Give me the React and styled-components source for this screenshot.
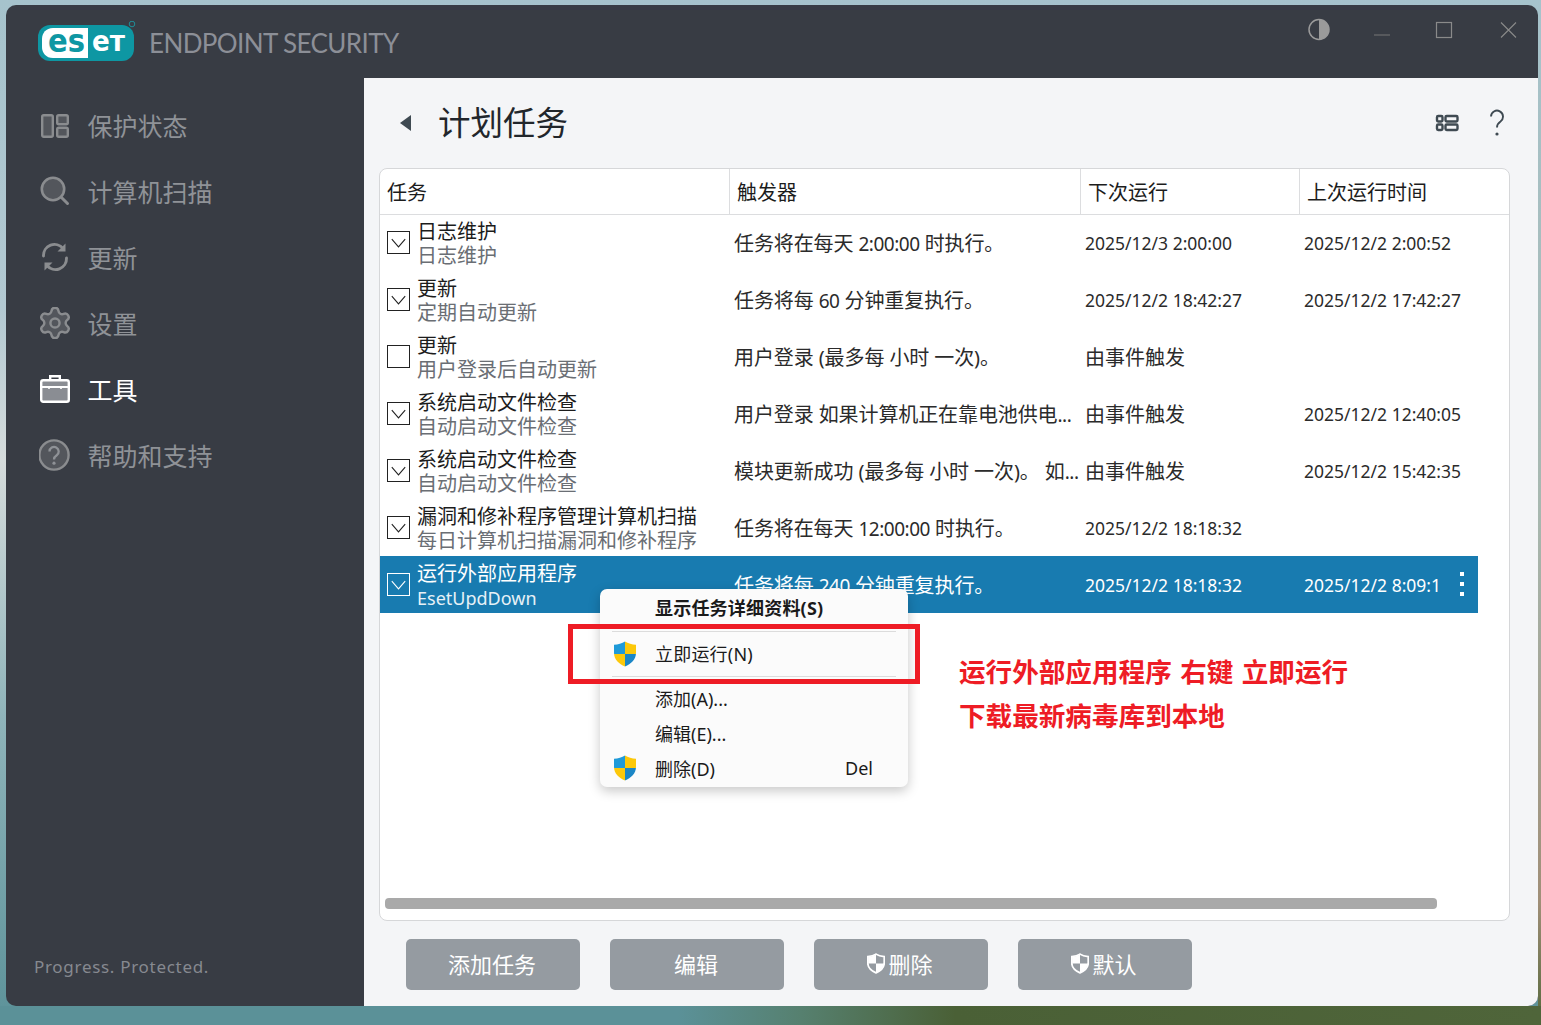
import React from "react";
import styled, { createGlobalStyle } from "styled-components";
import { Settings } from "lucide-react";

const GlobalStyle = createGlobalStyle`
  html, body { margin: 0; padding: 0; height: 100%; }
  body {
    font-family: "Noto Sans", "Noto Sans CJK SC", sans-serif;
    overflow: hidden;
    background:
      linear-gradient(90deg, #5b9198 44%, #56806f 52%, #4a6036 62%, #4f653a 100%) bottom / 100% 19px no-repeat,
      linear-gradient(180deg, #a6c3cc 0, #a8b8b0 50%, #a08f78 88%, #55683c 100%) right / 3px 100% no-repeat,
      linear-gradient(180deg, #a6c3cc 0, #b3c9d2 30%, #d6dcdc 45%, #8fb4ba 70%, #5c9299 100%);
  }
  #root { padding: 5px 3px 0 6px; }
`;

const Window = styled.div`
  position: relative;
  width: 1532px;
  height: 1001px;
  border-radius: 10px;
  overflow: hidden;
  background: #383c44;
  display: flex;
  flex-direction: column;
`;

const TitleBar = styled.header`
  height: 73px;
  flex: none;
  display: flex;
  align-items: flex-start;
  justify-content: space-between;
  padding: 13px 18px 0 32px;
  box-sizing: border-box;
`;

const Brand = styled.div`
  display: flex;
  align-items: center;
  gap: 11px;
  margin-top: 3px;
`;

const BrandName = styled.span`
  font-family: "Lato", sans-serif;
  font-size: 26px;
  font-weight: 400;
  letter-spacing: -0.6px;
  color: #8c8f97;
  white-space: nowrap;
  margin-top: 2px;
`;

const Controls = styled.div`
  display: flex;
  gap: 39px;
`;

const Body = styled.div`
  flex: 1;
  display: flex;
  min-height: 0;
`;

const Sidebar = styled.aside`
  width: 358px;
  flex: none;
  display: flex;
  flex-direction: column;
  padding: 14px 0 28px 33px;
  box-sizing: border-box;
`;

const Nav = styled.nav`
  display: flex;
  flex-direction: column;
`;

const NavItem = styled.a`
  height: 66px;
  display: flex;
  align-items: center;
  gap: 16.5px;
  font-size: 25px;
  color: ${({ $active }) => ($active ? "#ffffff" : "#8f9297")};
`;

const IconSlot = styled.span`
  width: 32px;
  height: 32px;
  flex: none;
  display: flex;
`;

const Tagline = styled.div`
  margin-top: auto;
  margin-left: -5px;
  font-size: 17px;
  letter-spacing: 0.7px;
  color: #868990;
`;

const Main = styled.main`
  flex: 1;
  min-width: 0;
  background: #f4f5f7;
  display: flex;
  flex-direction: column;
  padding-left: 15px;
`;

const PageHead = styled.div`
  height: 90px;
  flex: none;
  display: flex;
  align-items: center;
  padding: 0 33px 0 21px;
`;

const BackArrow = styled.span`
  width: 0;
  height: 0;
  border-style: solid;
  border-width: 8px 11px 8px 0;
  border-color: transparent #3f4a52 transparent transparent;
  margin-right: 27px;
`;

const PageTitle = styled.h1`
  margin: 0;
  font-size: 32.5px;
  font-weight: 400;
  color: #22262b;
  line-height: 1;
`;

const HeadTools = styled.div`
  margin-left: auto;
  display: flex;
  align-items: center;
  gap: 30px;
`;

const TableCard = styled.section`
  width: 1131px;
  height: 753px;
  flex: none;
  box-sizing: border-box;
  border: 1px solid #d6d7d9;
  border-radius: 8px;
  background: #fff;
  display: flex;
  flex-direction: column;
  overflow: hidden;
`;

const COLUMNS = "349px 351px 219px 179px";

const HeaderRow = styled.div`
  height: 46px;
  flex: none;
  display: grid;
  grid-template-columns: ${COLUMNS};
  border-bottom: 1px solid #dcdddf;
  box-sizing: border-box;
`;

const HeaderCell = styled.div`
  display: flex;
  align-items: center;
  padding-left: 7px;
  font-size: 20px;
  color: #1c1c1c;
  border-left: ${({ $first }) => ($first ? "none" : "1px solid #dcdddf")};
`;

const RowList = styled.div`
  flex: none;
  margin-top: -1px;
  display: flex;
  flex-direction: column;
`;

const Row = styled.div`
  height: 57px;
  width: 1098px;
  flex: none;
  position: relative;
  display: grid;
  grid-template-columns: ${COLUMNS};
  align-items: center;
  background: ${({ $selected }) => ($selected ? "#187bb0" : "transparent")};
  color: ${({ $selected }) => ($selected ? "#ffffff" : "#2b2b2b")};
`;

const TaskCell = styled.div`
  display: flex;
  align-items: center;
  padding-left: 8px;
`;

const CheckBox = styled.span`
  width: 23px;
  height: 23px;
  box-sizing: border-box;
  flex: none;
  border: 1px solid ${({ $selected }) => ($selected ? "#ffffff" : "#222222")};
  display: flex;
  align-items: center;
  justify-content: center;
  margin-right: 7px;
  margin-left: -1px;
`;

const TaskText = styled.div`
  display: flex;
  flex-direction: column;
  white-space: nowrap;
  padding-top: 1px;
`;

const TaskName = styled.span`
  font-size: 20px;
  line-height: 25px;
  color: ${({ $selected }) => ($selected ? "#ffffff" : "#1c1c1c")};
`;

const TaskSub = styled.span`
  font-size: ${({ $selected }) => ($selected ? "18px" : "20px")};
  line-height: 24px;
  color: ${({ $selected }) => ($selected ? "#e6f1f7" : "#6a6e74")};
`;

const TriggerCell = styled.div`
  font-size: 20px;
  padding-left: 5px;
  white-space: nowrap;
  overflow: hidden;
  letter-spacing: -0.1px;
`;

const TriggerNum = styled.span`
  font-size: 19px;
  letter-spacing: -0.5px;
`;

const TimeCell = styled.div`
  font-size: 17.5px;
  padding-left: 5px;
  white-space: nowrap;
`;

const EventCell = styled(TimeCell)`
  font-size: 20px;
`;

const MoreDots = styled.span`
  position: absolute;
  right: 14px;
  top: 16px;
  width: 4px;
  height: 4px;
  background: #fff;
  box-shadow: 0 10px 0 #fff, 0 20px 0 #fff;
`;

const ScrollTrack = styled.div`
  margin: auto 0 11px 5px;
  width: 1052px;
  height: 11px;
  flex: none;
  border-radius: 4px;
  background: #a9a9a9;
`;

const Footer = styled.footer`
  display: flex;
  gap: 30px;
  padding: 18px 0 0 27px;
`;

const ActionButton = styled.button`
  width: 174px;
  height: 51px;
  border: none;
  border-radius: 5px;
  background: #959ba1;
  color: #fff;
  font-family: inherit;
  font-size: 22px;
  padding: 0 2px 3px 0;
  display: flex;
  align-items: center;
  justify-content: center;
`;

const ContextMenu = styled.div`
  position: absolute;
  left: 594px;
  top: 584px;
  width: 308px;
  height: 198px;
  box-sizing: border-box;
  background: #fbfbfb;
  border-radius: 7px;
  box-shadow: 0 4px 12px rgba(0, 0, 0, 0.22);
  color: #1a1a1a;
  font-size: 18px;
`;

const MenuItem = styled.div`
  height: 35px;
  display: flex;
  align-items: center;
  position: relative;
  padding-left: 55px;
`;

const MenuHeading = styled(MenuItem)`
  height: 42px;
  box-sizing: border-box;
  padding-bottom: 6px;
  font-weight: 700;
  letter-spacing: 0.2px;
`;

const MenuRun = styled(MenuItem)`
  height: 44px;
  box-sizing: border-box;
  padding-bottom: 2px;
  letter-spacing: 0.2px;
`;

const MenuIcon = styled.span`
  position: absolute;
  left: 13px;
  top: 50%;
  transform: translateY(-50%);
  display: flex;
`;

const MenuHint = styled.span`
  position: absolute;
  right: 35px;
`;

const MenuLine = styled.div`
  height: 1px;
  margin: 0 12px ${({ $gap }) => ($gap ? "3px" : "0")};
  background: #dcdcdc;
`;

const Highlight = styled.div`
  position: absolute;
  left: 562px;
  top: 619px;
  width: 352px;
  height: 60px;
  box-sizing: border-box;
  border: 5px solid #ee1c25;
`;

const Note = styled.div`
  position: absolute;
  left: 953px;
  top: 645px;
  font-size: 26.6px;
  font-weight: 700;
  line-height: 44px;
  word-spacing: 1.5px;
  color: #ee1c25;
  white-space: nowrap;
`;

const Svg = ({ size = 32, h, children }) => (
  <svg width={size} height={h || size} viewBox={`0 0 ${size} ${h || size}`} fill="none">
    {children}
  </svg>
);

const EsetLogo = () => (
  <svg width="100" height="42" viewBox="0 0 100 42" style={{ display: "block" }}>
    <rect x="0" y="4" width="96" height="36" rx="12" fill="#0e97a3" />
    <path d="M15 7H50V37H15C8 37 4 32 4 26V18C4 12 8 7 15 7Z" fill="#fff" />
    <text x="10" y="31" fontFamily="DejaVu Sans" fontWeight="700" fontSize="32" textLength="37" lengthAdjust="spacingAndGlyphs" fill="#0e97a3">es</text>
    <text x="54" y="30" fontFamily="DejaVu Sans" fontWeight="700" fontSize="28" textLength="33" lengthAdjust="spacingAndGlyphs" fill="#fff">eт</text>
    <circle cx="94" cy="3" r="2.8" stroke="#1aa3ae" strokeWidth="0.8" fill="none" />
  </svg>
);

const ContrastIcon = () => (
  <Svg size={24}>
    <circle cx="12" cy="11.5" r="10" stroke="#9a9a9a" strokeWidth="1.5" />
    <path d="M12 1.5a10 10 0 0 1 0 20Z" fill="#9a9a9a" />
  </Svg>
);
const MinIcon = () => (
  <Svg size={24}>
    <path d="M4 17H20" stroke="#777" strokeWidth="1.2" />
  </Svg>
);
const MaxIcon = () => (
  <Svg size={24}>
    <rect x="3.5" y="4.5" width="15" height="15" stroke="#8a8a8a" strokeWidth="1.2" />
  </Svg>
);
const CloseIcon = () => (
  <Svg size={24}>
    <path d="M5 4.5L20 19.5M20 4.5L5 19.5" stroke="#8a8a8a" strokeWidth="1.1" />
  </Svg>
);

const StatusIcon = () => (
  <Svg>
    <g stroke="#8a8c8f" strokeWidth="2.4" fill="#53565c">
      <rect x="3.2" y="6.2" width="10.6" height="21.6" rx="1.5" />
      <rect x="18.2" y="6.2" width="10.6" height="9" rx="1.5" />
      <rect x="18.2" y="18.8" width="10.6" height="9" rx="1.5" />
    </g>
  </Svg>
);
const SearchIcon = () => (
  <Svg>
    <circle cx="14" cy="14" r="11.2" stroke="#8a8c8f" strokeWidth="2.6" fill="#53565c" />
    <path d="M22.5 22.5L28.5 28.5" stroke="#8a8c8f" strokeWidth="3" strokeLinecap="round" />
  </Svg>
);
const UpdateIcon = () => (
  <Svg>
    <g stroke="#8a8c8f" strokeWidth="2.9" strokeLinecap="round">
      <path d="M4.5 15A11 11 0 0 1 24 7.5" />
      <path d="M27.5 17A11 11 0 0 1 8 24.5" />
    </g>
    <path d="M26.5 2.5V10.5H18.5Z" fill="#8a8c8f" />
    <path d="M5.5 29.5V21.5H13.5Z" fill="#8a8c8f" />
  </Svg>
);
const GearIcon = () => (
  <Settings size={32} viewBox="1.5 1.5 21 21" color="#8a8c8f" strokeWidth={1.6} fill="#53565c" />
);
const ToolsIcon = () => (
  <Svg>
    <rect x="2.2" y="7.2" width="27.6" height="21.6" rx="2" fill="#8a8d93" stroke="#fff" strokeWidth="2.4" />
    <path d="M3 14H29" stroke="#fff" strokeWidth="2" />
    <path d="M11.2 7V3.2H20.8V7" stroke="#fff" strokeWidth="2.4" />
    <path d="M10 13V16M22 13V16" stroke="#fff" strokeWidth="1.6" />
  </Svg>
);
const HelpIcon = () => (
  <Svg>
    <circle cx="15" cy="16" r="14.6" stroke="#8a8c8f" strokeWidth="2.4" fill="#53565c" />
    <path d="M10.5 12.5a4.6 4.6 0 1 1 7.2 3.8c-1.7 1.1-2.7 2-2.7 4.2" stroke="#8f9297" strokeWidth="2.3" />
    <circle cx="15" cy="24.2" r="1.6" fill="#8f9297" />
  </Svg>
);

const ViewIcon = () => (
  <Svg size={24} h={18}>
    <g stroke="#3f4a52" strokeWidth="2.4" fill="none">
      <rect x="2" y="2" width="5.5" height="5.5" rx="1.2" />
      <rect x="2" y="10.5" width="5.5" height="5.5" rx="1.2" />
      <rect x="10.5" y="2" width="12" height="5.5" rx="1.2" />
      <rect x="10.5" y="10.5" width="12" height="5.5" rx="1.2" />
    </g>
  </Svg>
);
const QuestionIcon = () => (
  <Svg size={16} h={28}>
    <path d="M2 7.5a6 6 0 1 1 9.5 5c-2.2 1.5-3.5 3-3.5 6.1" stroke="#3f4a52" strokeWidth="1.9" />
    <circle cx="8" cy="25" r="1.6" fill="#3f4a52" />
  </Svg>
);

const CheckMark = ({ color }) => (
  <svg width="15" height="10" viewBox="0 0 15 10" fill="none">
    <path d="M0.8 1.2L7.5 8.8L14.2 1.2" stroke={color} strokeWidth="1.1" />
  </svg>
);

const SHIELD = "M12 0.5C15 2.6 19 3.5 23 3.8V12C23 18.5 18 23 12 25.5C6 23 1 18.5 1 12V3.8C5 3.5 9 2.6 12 0.5Z";

const UacShield = ({ id }) => (
  <svg width="24" height="26" viewBox="0 0 24 26">
    <clipPath id={id}>
      <path d={SHIELD} />
    </clipPath>
    <g clipPath={`url(#${id})`}>
      <rect x="0" y="0" width="12" height="13" fill="#1f9ad8" />
      <rect x="12" y="0" width="12" height="13" fill="#fcc80a" />
      <rect x="0" y="13" width="12" height="13" fill="#fcc80a" />
      <rect x="12" y="13" width="12" height="13" fill="#1b86c6" />
    </g>
  </svg>
);

const ButtonShield = () => (
  <svg width="18" height="23" viewBox="0 0 24 26" fill="none" style={{ marginRight: 3 }}>
    <path d={SHIELD} stroke="#fff" strokeWidth="2.4" />
    <path d="M12 1V13H1.5V4C6 3.5 9.5 2.6 12 1Z" fill="#fff" />
    <path d="M12 13H22.5C22 18 18 23 12 25Z" fill="#fff" />
  </svg>
);

const navItems = [
  { label: "保护状态", icon: <StatusIcon /> },
  { label: "计算机扫描", icon: <SearchIcon /> },
  { label: "更新", icon: <UpdateIcon /> },
  { label: "设置", icon: <GearIcon /> },
  { label: "工具", icon: <ToolsIcon />, active: true },
  { label: "帮助和支持", icon: <HelpIcon /> },
];

const columns = ["任务", "触发器", "下次运行", "上次运行时间"];

const tasks = [
  { name: "日志维护", sub: "日志维护", on: true, trigger: "任务将在每天 2:00:00 时执行。", next: "2025/12/3 2:00:00", last: "2025/12/2 2:00:52" },
  { name: "更新", sub: "定期自动更新", on: true, trigger: "任务将每 60 分钟重复执行。", next: "2025/12/2 18:42:27", last: "2025/12/2 17:42:27" },
  { name: "更新", sub: "用户登录后自动更新", on: false, trigger: "用户登录 (最多每 小时 一次)。", event: true, next: "由事件触发", last: "" },
  { name: "系统启动文件检查", sub: "自动启动文件检查", on: true, trigger: "用户登录 如果计算机正在靠电池供电...", event: true, next: "由事件触发", last: "2025/12/2 12:40:05" },
  { name: "系统启动文件检查", sub: "自动启动文件检查", on: true, trigger: "模块更新成功 (最多每 小时 一次)。 如...", event: true, next: "由事件触发", last: "2025/12/2 15:42:35" },
  { name: "漏洞和修补程序管理计算机扫描", sub: "每日计算机扫描漏洞和修补程序", on: true, trigger: "任务将在每天 12:00:00 时执行。", next: "2025/12/2 18:18:32", last: "" },
  { name: "运行外部应用程序", sub: "EsetUpdDown", on: true, selected: true, trigger: "任务将每 240 分钟重复执行。", next: "2025/12/2 18:18:32", last: "2025/12/2 8:09:1" },
];

// digits run narrower in the original UI font
const TriggerText = ({ text }) =>
  text.split(/([0-9:.]+)/).map((part, i) =>
    i % 2 ? <TriggerNum key={i}>{part}</TriggerNum> : part
  );

const TaskRow = ({ task }) => {
  const NextCell = task.event ? EventCell : TimeCell;
  return (
    <Row $selected={task.selected}>
      <TaskCell>
        <CheckBox $selected={task.selected}>
          {task.on && <CheckMark color={task.selected ? "#fff" : "#222"} />}
        </CheckBox>
        <TaskText>
          <TaskName $selected={task.selected}>{task.name}</TaskName>
          <TaskSub $selected={task.selected}>{task.sub}</TaskSub>
        </TaskText>
      </TaskCell>
      <TriggerCell><TriggerText text={task.trigger} /></TriggerCell>
      <NextCell>{task.next}</NextCell>
      <TimeCell>{task.last}</TimeCell>
      {task.selected && <MoreDots />}
    </Row>
  );
};

export default function App() {
  return (
    <>
      <GlobalStyle />
      <Window>
        <TitleBar>
          <Brand>
            <EsetLogo />
            <BrandName>ENDPOINT SECURITY</BrandName>
          </Brand>
          <Controls>
            <ContrastIcon />
            <MinIcon />
            <MaxIcon />
            <CloseIcon />
          </Controls>
        </TitleBar>
        <Body>
          <Sidebar>
            <Nav>
              {navItems.map((item) => (
                <NavItem key={item.label} $active={item.active}>
                  <IconSlot>{item.icon}</IconSlot>
                  {item.label}
                </NavItem>
              ))}
            </Nav>
            <Tagline>Progress. Protected.</Tagline>
          </Sidebar>
          <Main>
            <PageHead>
              <BackArrow />
              <PageTitle>计划任务</PageTitle>
              <HeadTools>
                <ViewIcon />
                <QuestionIcon />
              </HeadTools>
            </PageHead>
            <TableCard>
              <HeaderRow>
                {columns.map((col, i) => (
                  <HeaderCell key={col} $first={i === 0}>{col}</HeaderCell>
                ))}
              </HeaderRow>
              <RowList>
                {tasks.map((task, i) => (
                  <TaskRow key={i} task={task} />
                ))}
              </RowList>
              <ScrollTrack />
            </TableCard>
            <Footer>
              <ActionButton>添加任务</ActionButton>
              <ActionButton>编辑</ActionButton>
              <ActionButton><ButtonShield />删除</ActionButton>
              <ActionButton><ButtonShield />默认</ActionButton>
            </Footer>
          </Main>
        </Body>
        <ContextMenu>
          <MenuHeading>显示任务详细资料(S)</MenuHeading>
          <MenuLine />
          <MenuRun>
            <MenuIcon><UacShield id="uac-run" /></MenuIcon>
            立即运行(N)
          </MenuRun>
          <MenuLine $gap />
          <MenuItem>添加(A)...</MenuItem>
          <MenuItem>编辑(E)...</MenuItem>
          <MenuItem>
            <MenuIcon><UacShield id="uac-del" /></MenuIcon>
            删除(D)
            <MenuHint>Del</MenuHint>
          </MenuItem>
        </ContextMenu>
        <Highlight />
        <Note>
          运行外部应用程序 右键 立即运行
          <br />
          下载最新病毒库到本地
        </Note>
      </Window>
    </>
  );
}
